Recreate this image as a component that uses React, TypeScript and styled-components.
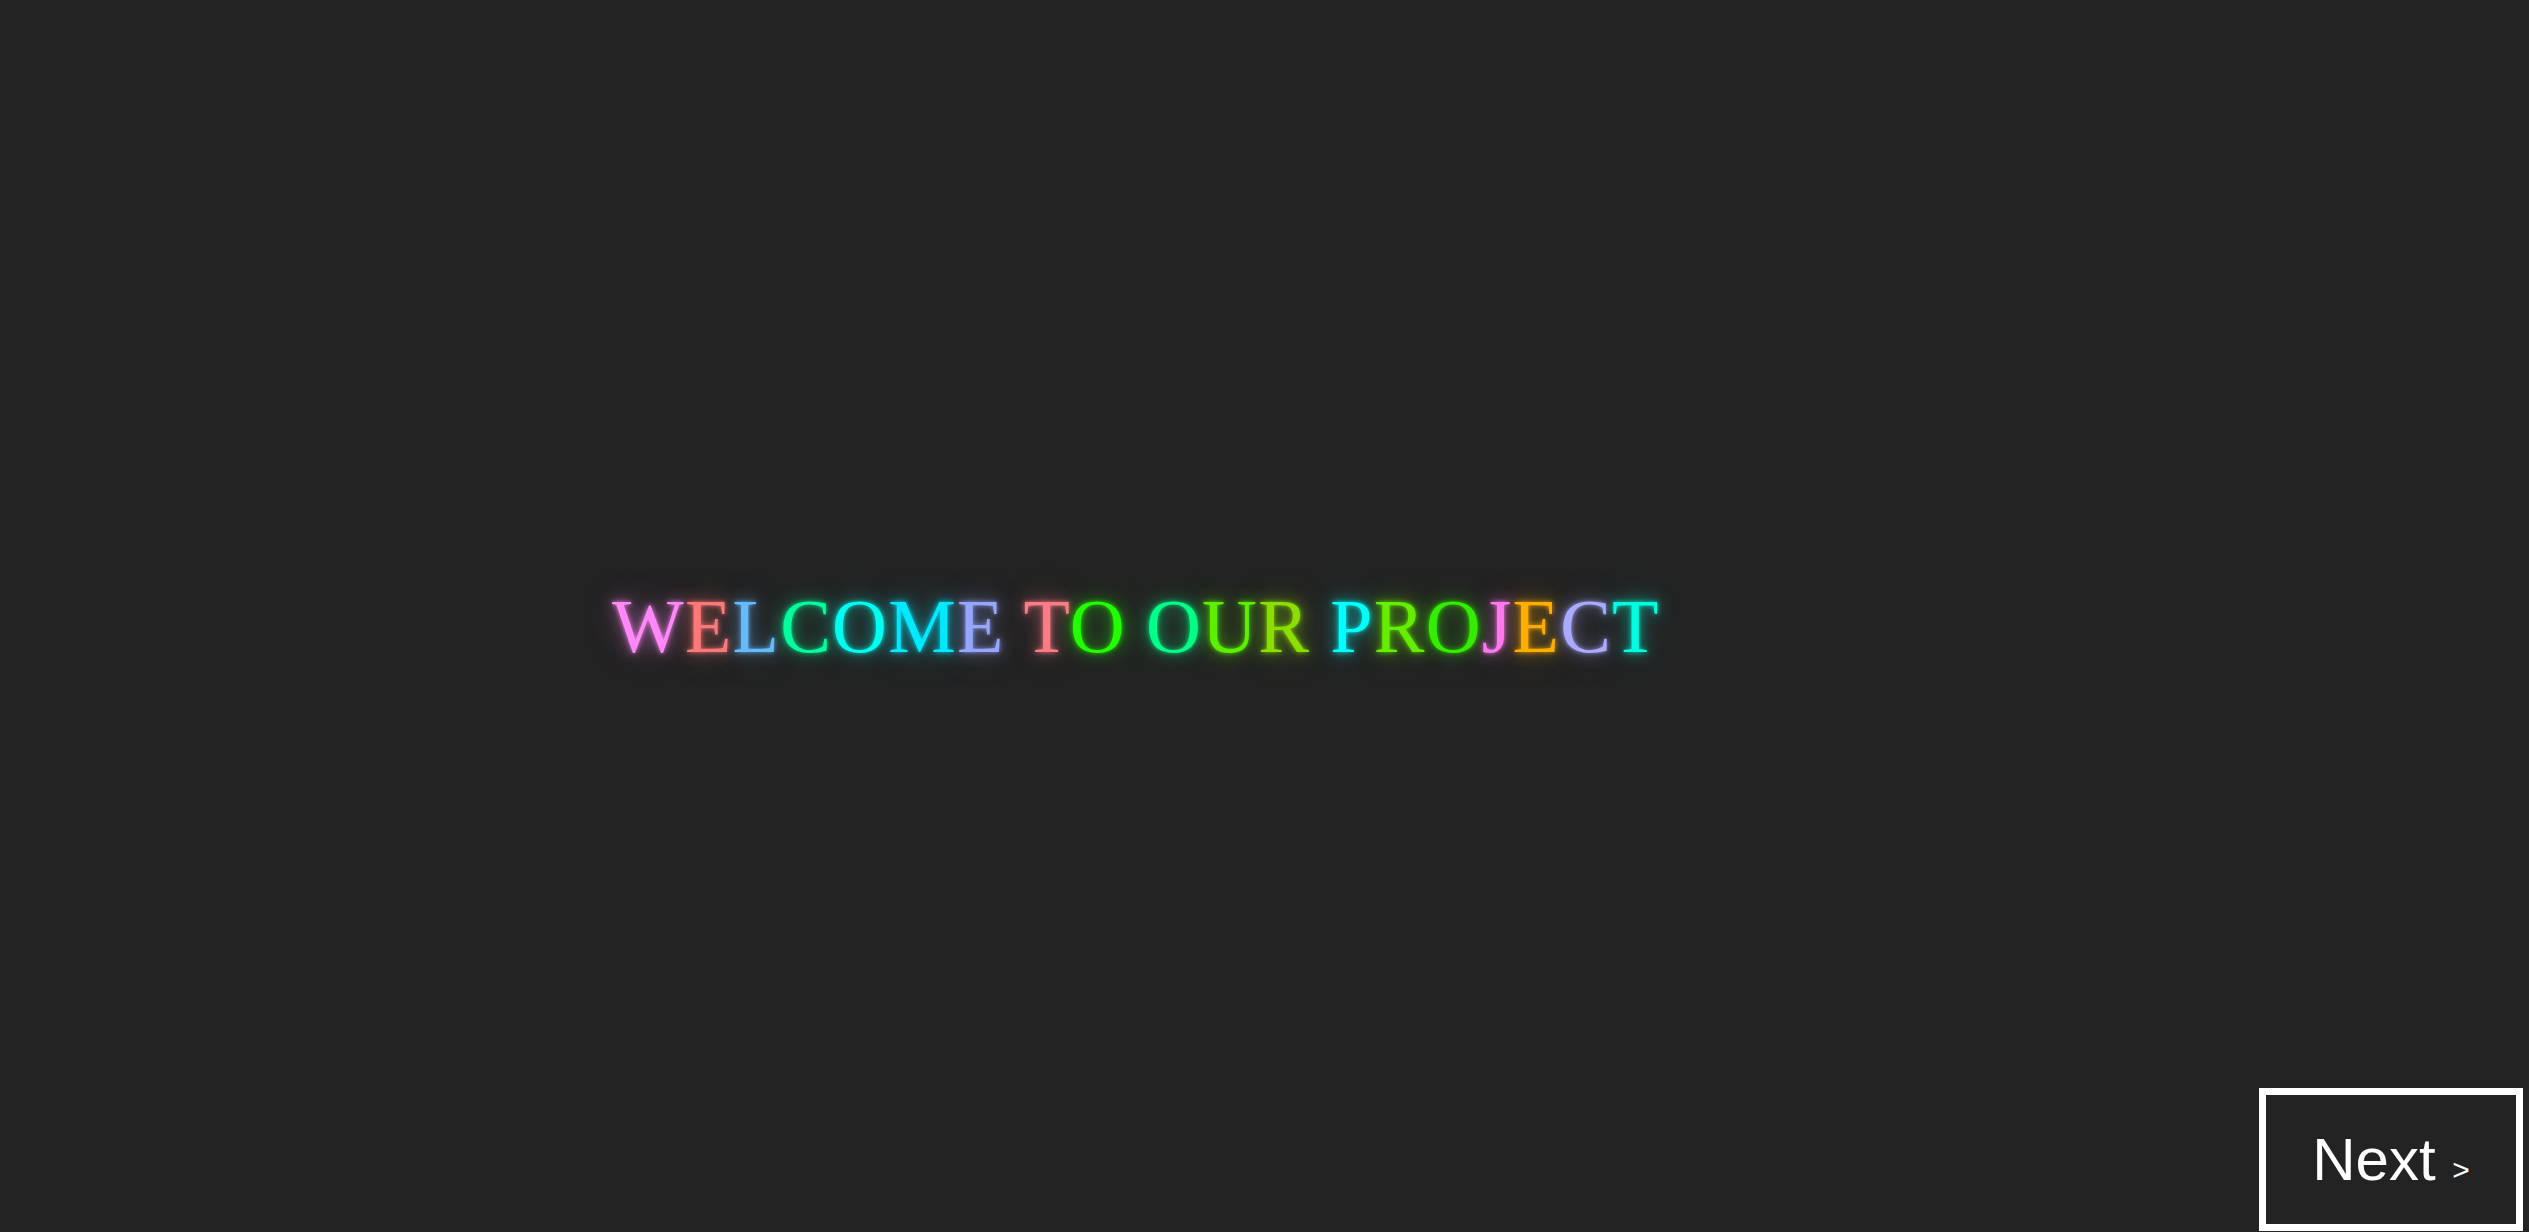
import React from "react";
import styled, { createGlobalStyle } from "styled-components";

const GlobalStyle = createGlobalStyle`
  html, body {
    margin: 0;
    padding: 0;
    background: #232323;
  }
  * { box-sizing: border-box; }
`;

const Page = styled.div`
  height: 100vh;
  display: flex;
  flex-direction: column;
  background: #232323;
  overflow: hidden;
`;

const Title = styled.h1`
  margin: 588px 0 0 0;
  padding-left: 612px;
  font-family: "Liberation Serif", "Times New Roman", serif;
  font-weight: normal;
  font-size: 76px;
  letter-spacing: 1.2px;
  line-height: 1;
  white-space: pre;
`;

const Letter = styled.span<{ $c: string }>`
  color: ${(p) => p.$c};
  text-shadow: 0 0 5px ${(p) => p.$c}dd, 0 0 16px ${(p) => p.$c}99,
    0 0 36px ${(p) => p.$c}44;
`;

const NextButton = styled.button`
  margin: auto 6px 1px 0;
  align-self: flex-end;
  width: 264px;
  height: 143px;
  border: 7px solid #ffffff;
  background: #232323;
  color: #ffffff;
  font-family: "Liberation Sans", Arial, sans-serif;
  font-size: 60px;
  display: flex;
  align-items: center;
  justify-content: center;
  padding: 0;
  cursor: pointer;
`;

const Label = styled.span`
  white-space: pre;
  line-height: normal;
`;

const Arrow = styled.span`
  font-size: 30px;
`;

const letters: [string, string][] = [
  ["W", "#ff88f8"],
  ["E", "#ff7878"],
  ["L", "#66bbff"],
  ["C", "#00ff9c"],
  ["O", "#00fff0"],
  ["M", "#00eaff"],
  ["E", "#96a6ff"],
  [" ", "#ffffff"],
  ["T", "#ff7a88"],
  ["O", "#22ff00"],
  [" ", "#ffffff"],
  ["O", "#00ff88"],
  ["U", "#5cf000"],
  ["R", "#8ade00"],
  [" ", "#ffffff"],
  ["P", "#00ffff"],
  ["R", "#66ee00"],
  ["O", "#33ee00"],
  ["J", "#ff78f0"],
  ["E", "#ffae00"],
  ["C", "#aaaaff"],
  ["T", "#00ffe0"],
];

export default function App() {
  return (
    <>
      <GlobalStyle />
      <Page>
        <Title>
          {letters.map(([ch, c], i) => (
            <Letter key={i} $c={c}>
              {ch}
            </Letter>
          ))}
        </Title>
        <NextButton>
          <Label>
            {"Next "}
            <Arrow>&gt;</Arrow>
          </Label>
        </NextButton>
      </Page>
    </>
  );
}
